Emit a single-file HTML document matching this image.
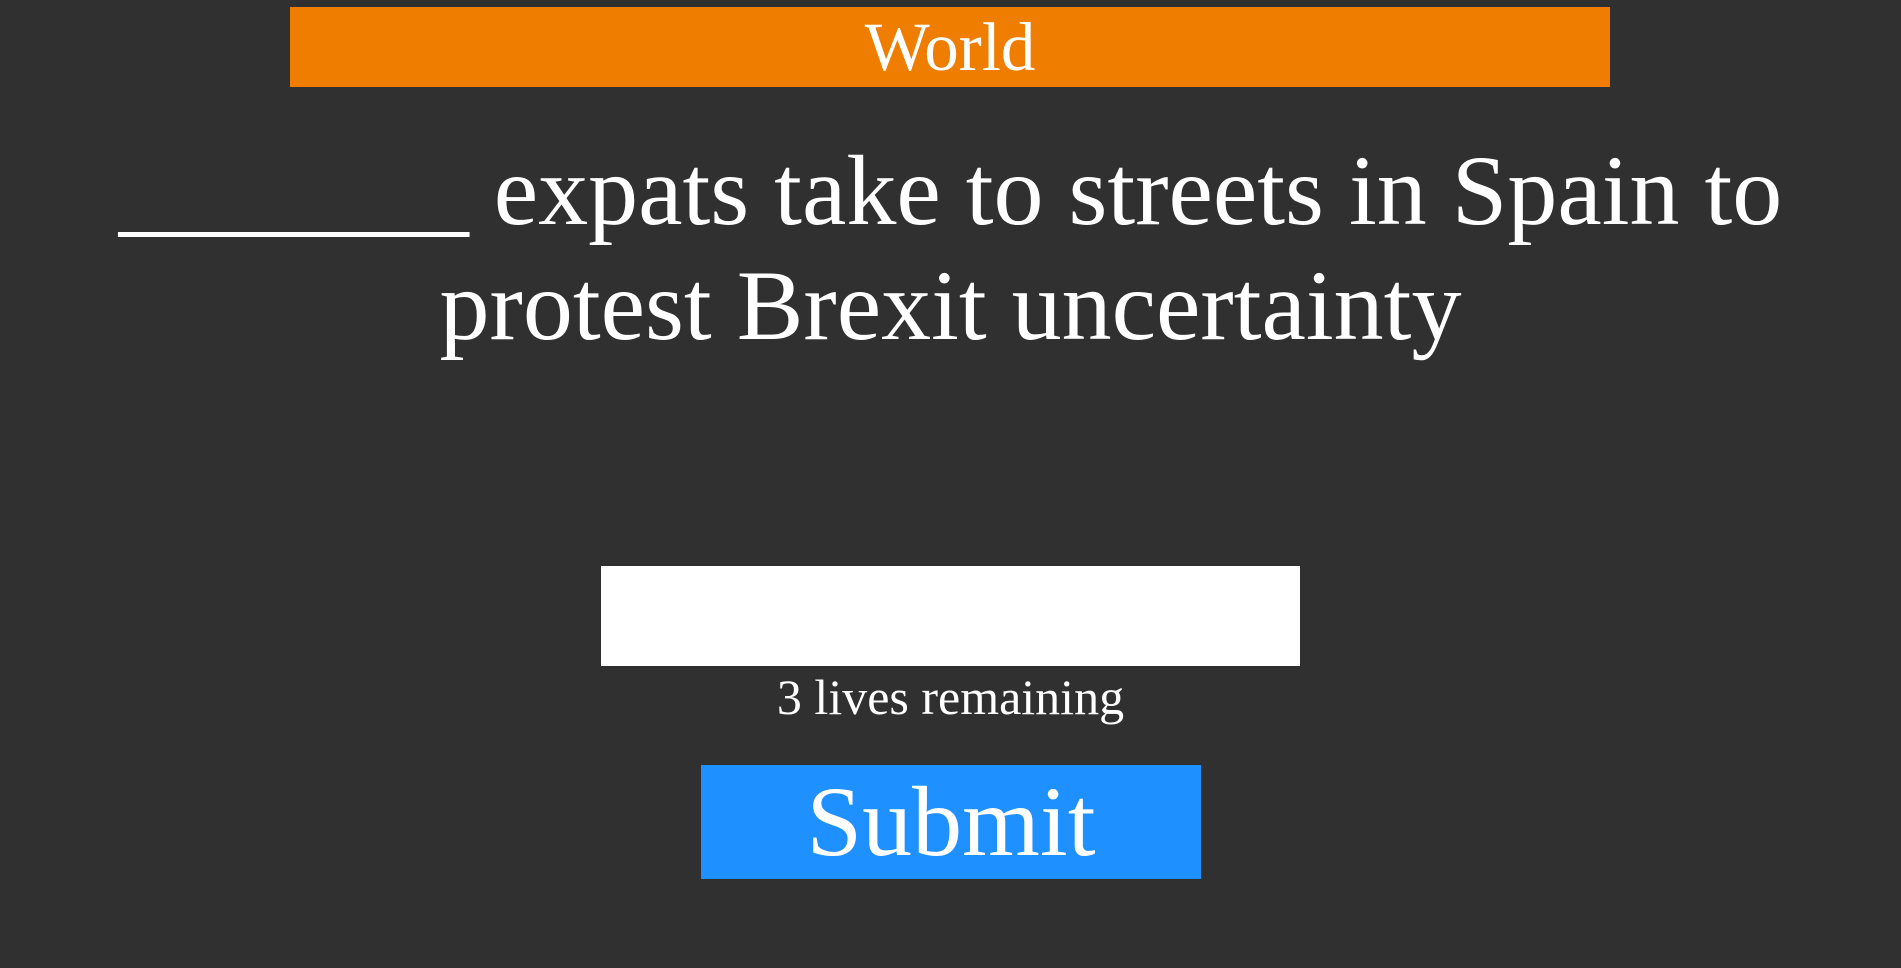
<!DOCTYPE html>
<html><head><meta charset="utf-8"><style>
html,body{margin:0;padding:0;width:1901px;height:968px;background:#303030;overflow:hidden;font-family:"Liberation Serif",serif;color:#fff;position:relative}
.bar{position:absolute;left:290px;top:7px;width:1320px;height:80px;background:#ee7d00;text-align:center;font-size:69px;line-height:80px}
.h{position:absolute;left:0;top:133px;width:1901px;text-align:center;font-size:100px;line-height:115px}
.inp{position:absolute;left:601px;top:566px;width:699px;height:100px;background:#fff}
.lives{position:absolute;left:0;top:668px;width:1901px;text-align:center;font-size:50px;line-height:58px}
.btn{position:absolute;left:701px;top:765px;width:500px;height:114px;background:#1e90ff;text-align:center;font-size:100px;line-height:114px}
</style></head><body>
<div class="bar">World</div>
<div class="h">_______ expats take to streets in Spain to<br>protest Brexit uncertainty</div>
<div class="inp"></div>
<div class="lives">3 lives remaining</div>
<div class="btn">Submit</div>
</body></html>
